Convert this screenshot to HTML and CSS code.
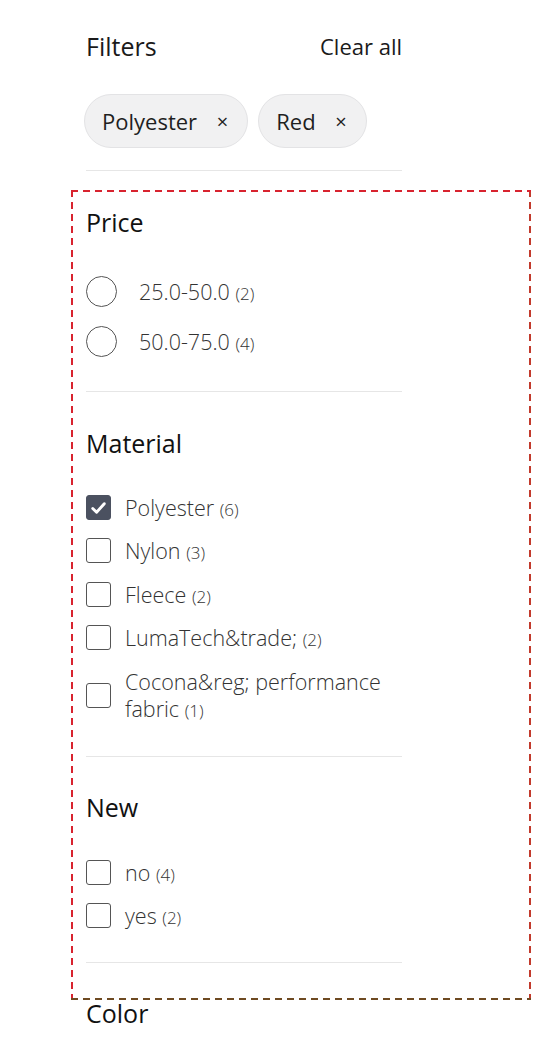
FILE: index.html
```html
<!DOCTYPE html>
<html>
<head>
<meta charset="utf-8">
<link rel="stylesheet" href="styles.css">
</head>
<body>
<div class="filters">
  <div class="filters-head">
    <span class="filters-title">Filters</span>
    <span class="clear-all">Clear all</span>
  </div>
  <div class="chips">
    <span class="chip">Polyester <span class="chip-x">×</span></span>
    <span class="chip">Red <span class="chip-x">×</span></span>
  </div>
  <div class="rule"></div>

  <div class="outlined">
    <section class="group group-first">
      <h3 class="group-title">Price</h3>
      <ul class="options options-radio">
        <li class="option"><span class="radio"></span><span class="text"><span class="label">25.0-50.0</span> <span class="count">(2)</span></span></li>
        <li class="option"><span class="radio"></span><span class="text"><span class="label">50.0-75.0</span> <span class="count">(4)</span></span></li>
      </ul>
    </section>

    <section class="group">
      <h3 class="group-title">Material</h3>
      <ul class="options options-check">
        <li class="option"><span class="check checked"><svg viewBox="0 0 24 24" width="24" height="24"><path d="M6 12.5l4 4 8-9" fill="none" stroke="#fff" stroke-width="3" stroke-linecap="round" stroke-linejoin="round"/></svg></span><span class="text"><span class="label">Polyester</span> <span class="count">(6)</span></span></li>
        <li class="option"><span class="check"></span><span class="text"><span class="label">Nylon</span> <span class="count">(3)</span></span></li>
        <li class="option"><span class="check"></span><span class="text"><span class="label">Fleece</span> <span class="count">(2)</span></span></li>
        <li class="option"><span class="check"></span><span class="text"><span class="label">LumaTech&amp;trade;</span> <span class="count">(2)</span></span></li>
        <li class="option option-wrap"><span class="check"></span><span class="text"><span class="label">Cocona&amp;reg; performance fabric</span> <span class="count">(1)</span></span></li>
      </ul>
    </section>

    <section class="group group-last">
      <h3 class="group-title">New</h3>
      <ul class="options options-check">
        <li class="option"><span class="check"></span><span class="text"><span class="label">no</span> <span class="count">(4)</span></span></li>
        <li class="option"><span class="check"></span><span class="text"><span class="label">yes</span> <span class="count">(2)</span></span></li>
      </ul>
    </section>
  </div>

  <h3 class="group-title color-title">Color</h3>
</div>
</body>
</html>
```

FILE: styles.css
```css
* { box-sizing: border-box; }
html, body { margin: 0; padding: 0; background: #fff; }
body {
  font-family: "Open Sans", "Noto Sans", sans-serif;
  color: #222;
  width: 550px;
  height: 1040px;
  overflow: hidden;
}
.filters {
  padding: 29px 0 0 86px;
}
.filters-head {
  width: 316px;
  display: flex;
  justify-content: space-between;
  align-items: center;
  height: 34px;
}
.filters-title {
  font-size: 25px;
  color: #1a1a1a;
}
.clear-all {
  font-size: 22px;
  color: #1a1a1a;
}
.chips {
  display: flex;
  gap: 10px;
  margin: 31px 0 0 -2px;
}
.chip {
  display: inline-flex;
  align-items: center;
  height: 54px;
  padding: 0 19px 0 17px;
  border-radius: 27px;
  background: #f1f1f2;
  border: 1.5px solid #e3e3e5;
  font-size: 22px;
  color: #1f1f1f;
  white-space: pre;
}
.chip-x {
  font-size: 20px;
  margin-left: 14px;
}
.rule {
  width: 316px;
  height: 0;
  border-top: 1.5px solid #e6e6e6;
  margin-top: 22px;
}
.outlined {
  position: relative;
  margin: 19px 0 0 -15px;
  width: 460px;
  padding: 16px 0 37px 15px;
}
.outlined::before {
  content: "";
  position: absolute;
  inset: 0;
  pointer-events: none;
  background:
    repeating-linear-gradient(90deg, #d8232f 0 7px, transparent 7px 12px) left top / 100% 2px no-repeat,
    repeating-linear-gradient(90deg, #6e4a22 0 7px, transparent 7px 12px) left bottom / 100% 2px no-repeat,
    repeating-linear-gradient(180deg, #d8232f 0 7px, transparent 7px 12px) left top / 2px 100% no-repeat,
    repeating-linear-gradient(180deg, #c23a2c 0 7px, transparent 7px 12px) right top / 2px 100% no-repeat;
}
.group {
  width: 316px;
  border-bottom: 1.5px solid #e6e6e6;
  padding-top: 35px;
  padding-bottom: 34px;
}
.group-first { padding-top: 0; padding-bottom: 35px; }
.group-last { padding-top: 34px; padding-bottom: 33px; }
.group-title {
  margin: 0;
  font-size: 25px;
  line-height: 32px;
  font-weight: 400;
  color: #111;
}
.options {
  list-style: none;
  margin: 0;
  padding: 0;
  display: flex;
  flex-direction: column;
}
.options-radio {
  margin-top: 38px;
  gap: 20px;
}
.options-check {
  margin-top: 35px;
  gap: 16.3px;
}
.option {
  display: flex;
  align-items: center;
}
.option-wrap { margin-top: 1px; }
.group-last .options-check { margin-top: 36px; }
.radio {
  flex: none;
  width: 31px;
  height: 31px;
  border-radius: 50%;
  border: 1.5px solid #555;
  margin-right: 22px;
}
.options-radio .option { height: 30px; }
.check {
  flex: none;
  width: 25px;
  height: 25px;
  border-radius: 3px;
  border: 1.5px solid #555;
  margin-right: 14px;
  display: flex;
  align-items: center;
  justify-content: center;
}
.check svg { display: block; }
.check.checked {
  background: #4b5160;
  border-color: #4b5160;
}
.text {
  display: block;
  font-size: 21.5px;
  font-weight: 300;
  line-height: 27px;
  color: #333;
}
.count {
  font-size: 17px;
  line-height: 1;
}
.color-title {
  margin-top: -3px;
}
```
